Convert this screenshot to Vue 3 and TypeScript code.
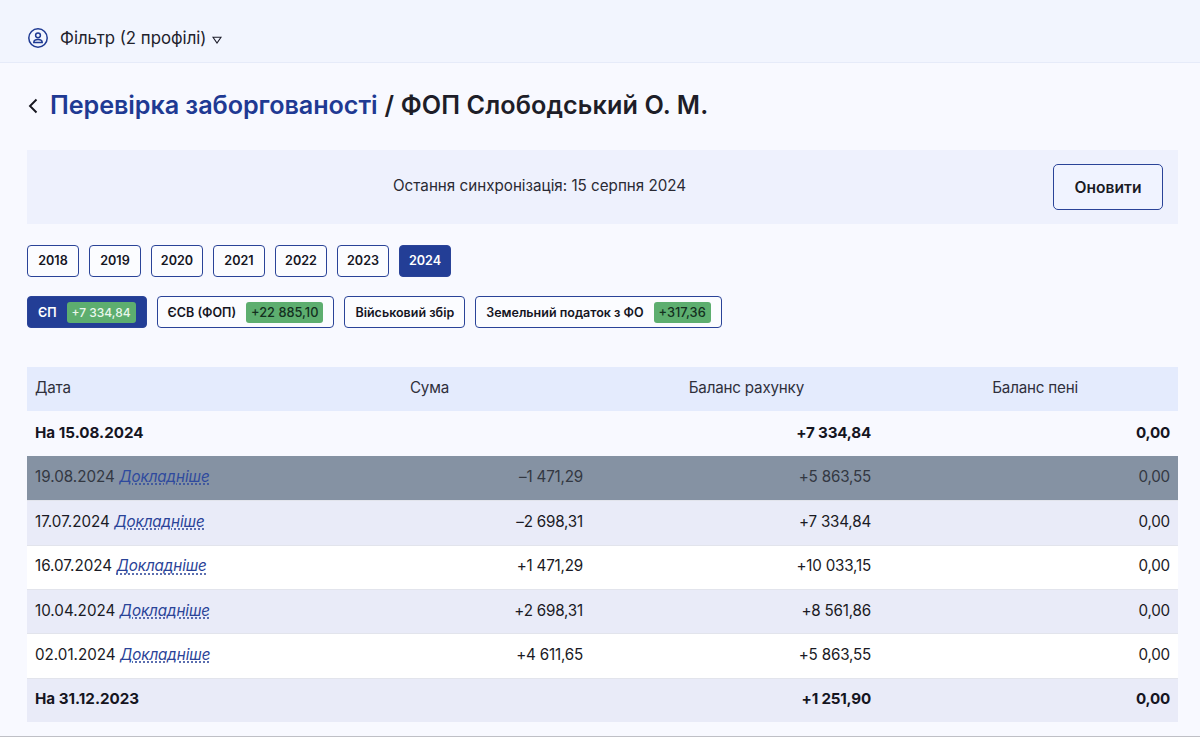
<script setup lang="ts">
interface Row { date: string; sum: string; bal: string; pen: string; kind: string }
const years: string[] = ['2018', '2019', '2020', '2021', '2022', '2023', '2024']
const tabs = [
  { name: 'ЄП', val: '+7 334,84', on: true },
  { name: 'ЄСВ (ФОП)', val: '+22 885,10', on: false },
  { name: 'Військовий збір', val: '', on: false },
  { name: 'Земельний податок з ФО', val: '+317,36', on: false },
]
const rows: Row[] = [
  { date: '19.08.2024', sum: '–1 471,29', bal: '+5 863,55', pen: '0,00', kind: 'dim' },
  { date: '17.07.2024', sum: '–2 698,31', bal: '+7 334,84', pen: '0,00', kind: 'alt' },
  { date: '16.07.2024', sum: '+1 471,29', bal: '+10 033,15', pen: '0,00', kind: 'plain' },
  { date: '10.04.2024', sum: '+2 698,31', bal: '+8 561,86', pen: '0,00', kind: 'alt' },
  { date: '02.01.2024', sum: '+4 611,65', bal: '+5 863,55', pen: '0,00', kind: 'plain' },
]
</script>

<template>
  <div class="page">
    <header class="top">
      <svg class="user" width="22" height="22" viewBox="0 0 22 22" fill="none" stroke="#1f3a93" stroke-width="1.5">
        <circle cx="11" cy="11" r="9.2" />
        <circle cx="11" cy="8.3" r="2.4" />
        <path d="M6.8 15.6c0-2 1.6-3 4.2-3s4.2 1 4.2 3z" />
      </svg>
      <span class="filter">Фільтр (2 профілі)</span>
      <svg class="caret" width="10" height="8" viewBox="0 0 10 8" fill="none" stroke="#1c1c2a" stroke-width="1.1">
        <path d="M1 1.2h8L5 7z" />
      </svg>
    </header>

    <main class="body">
      <h1 class="title">
        <svg class="back" width="10" height="16" viewBox="0 0 10 16" fill="none" stroke="#16161f" stroke-width="1.9">
          <path d="M8.5 1.5 2 8l6.5 6.5" />
        </svg>
        <span class="crumb">Перевірка заборгованості</span>
        <span class="rest">/ ФОП Слободський О. М.</span>
      </h1>

      <section class="sync">
        <span class="sync-text">Остання синхронізація: 15 серпня 2024</span>
        <button class="refresh">Оновити</button>
      </section>

      <div class="years">
        <button v-for="y in years" :key="y" class="chip year" :class="{ on: y === '2024' }">{{ y }}</button>
      </div>

      <div class="tabs">
        <button v-for="t in tabs" :key="t.name" class="chip tab" :class="{ on: t.on }">
          <span>{{ t.name }}</span>
          <span v-if="t.val" class="val">{{ t.val }}</span>
        </button>
      </div>

      <div class="table">
        <div class="row head">
          <div>Дата</div>
          <div class="h2">Сума</div>
          <div class="h3">Баланс рахунку</div>
          <div class="h4">Баланс пені</div>
        </div>
        <div class="row strong">
          <div>На 15.08.2024</div>
          <div></div>
          <div class="num">+7 334,84</div>
          <div class="num">0,00</div>
        </div>
        <div v-for="r in rows" :key="r.date" class="row" :class="r.kind">
          <div>{{ r.date }} <a class="more">Докладніше</a></div>
          <div class="num">{{ r.sum }}</div>
          <div class="num">{{ r.bal }}</div>
          <div class="num">{{ r.pen }}</div>
        </div>
        <div class="row strong alt end">
          <div>На 31.12.2023</div>
          <div></div>
          <div class="num">+1 251,90</div>
          <div class="num">0,00</div>
        </div>
      </div>
    </main>
  </div>
</template>

<style>
html, body { margin: 0; background: #f8f9ff; }
</style>

<style scoped>
.page {
  height: 737px;
  box-sizing: border-box;
  border-bottom: 1px solid #bfc0c6;
  overflow: hidden;
  background: #f8f9ff;
  color: #1a1a24;
  font-family: Inter, "Noto Sans", sans-serif;
}
.top {
  height: 63px;
  box-sizing: border-box;
  padding: 14px 0 0 27px;
  display: flex;
  align-items: center;
  background: #f2f5fe;
  border-bottom: 1px solid #e6ebf9;
}
.user { margin-right: 11px; }
.filter { font-size: 16.8px; color: #22222c; margin-right: 5px; }
.caret { margin-top: 3px; }
.body { padding: 0 22px 0 27px; }
.title {
  margin: 0;
  height: 87px;
  box-sizing: border-box;
  padding-bottom: 4px;
  display: flex;
  align-items: center;
  font-size: 25.2px;
  font-weight: 600;
}
.back { margin: 2px 12px 0 1px; }
.crumb { color: #1f3a93; margin-right: 7px; letter-spacing: -0.08px; }
.rest { color: #1e1e28; letter-spacing: 0.1px; }
.sync {
  height: 74px;
  display: flex;
  align-items: center;
  justify-content: flex-end;
  position: relative;
  background: #eef1fd;
  padding-right: 15px;
}
.sync-text {
  position: absolute;
  left: 366px;
  margin-bottom: 3px;
  font-size: 15.2px;
  color: #2a2a34;
}
.refresh {
  width: 110px;
  height: 46px;
  border: 1px solid #2a4398;
  border-radius: 5px;
  background: #f0f3ff;
  color: #1a1a24;
  font: 600 15.6px Inter, "Noto Sans", sans-serif;
}
.years { display: flex; gap: 10px; margin-top: 21px; }
.tabs { display: flex; gap: 10px; margin-top: 19.5px; }
.chip {
  box-sizing: border-box;
  height: 31.5px;
  border: 1px solid #2a4398;
  border-radius: 4px;
  background: #fbfcff;
  color: #15151f;
  font: 600 12.5px Inter, "Noto Sans", sans-serif;
  padding: 0;
}
.year { width: 52px; font-size: 12.6px; }
.tabs .chip { height: 32px; }
.chip.on { background: #233e96; color: #fff; }
.tab {
  display: flex;
  align-items: center;
  gap: 10px;
  padding: 0 10px;
  white-space: nowrap;
}
.val {
  background: #5dae6f;
  color: #14301f;
  border-radius: 3px;
  padding: 3px 5px;
  font-size: 12.8px;
  font-weight: 500;
}
.chip.on .val { color: #eaf7ec; font-size: 12px; }
.table { margin-top: 39px; font-size: 15.2px; }
.row {
  display: grid;
  grid-template-columns: 243px 313px 288px 299px;
  height: 44.4px;
  align-items: center;
  box-sizing: border-box;
  padding: 0 0 3px 8px;
}
.head { background: #e4ebfd; color: #30303c; letter-spacing: -0.2px; }
.h2 { text-align: right; padding-right: 142px; }
.h3 { text-align: right; padding-right: 75px; }
.h4 { text-align: right; padding-right: 100px; }
.num { text-align: right; padding-right: 8px; letter-spacing: -0.2px; }
.strong { font-weight: 700; color: #15151f; }
.dim { background: #8592a3; color: #333842; }
.alt { background: #e9ebf8; }
.plain { background: #ffffff; }
.row.alt, .row.plain { border-top: 1px solid #e2e4ec; }
.more {
  color: #2a4398;
  font-style: italic;
  text-decoration: underline dotted;
  text-underline-offset: 2px;
  letter-spacing: -0.1px;
}
.dim .more { color: #2f4a9e; }
</style>
